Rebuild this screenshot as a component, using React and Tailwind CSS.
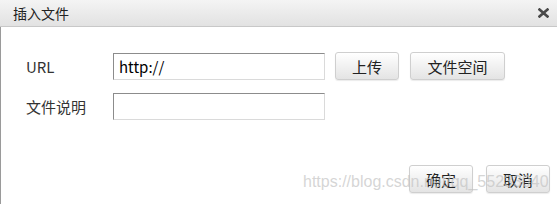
import React from "react";

const cjk = { fontFamily: '"Noto Sans CJK SC", "Noto Sans", sans-serif' };

function Btn({ children, w }) {
  return (
    <button
      className={`${w} h-[28px] rounded-[3px] border border-[#cfcfcf] bg-gradient-to-b from-[#ffffff] to-[#e4e4e4] text-[15px] text-[#222] leading-none flex items-center justify-center shadow-[0_1px_1px_rgba(0,0,0,0.08)]`}
      style={cjk}
    >
      {children}
    </button>
  );
}

export default function App() {
  return (
    <div className="relative w-[557px] h-[204px] overflow-hidden bg-white" style={cjk}>
      <div className="h-[27px] flex items-center justify-between pl-[13px] pr-[8px] bg-gradient-to-b from-[#f4f4f4] to-[#e2e2e2] border-b border-[#c8c8c8]">
        <span className="text-[14px] text-[#222] leading-none">插入文件</span>
        <svg width="11" height="10" viewBox="0 0 11 10">
          <path d="M1.5 1.5 L9.5 8.5 M9.5 1.5 L1.5 8.5" stroke="#4a4a4a" strokeWidth="2.6" strokeLinecap="square" />
        </svg>
      </div>
      <div className="flex flex-col h-[177px] border-l border-[#9a9a9a] pt-[25px]">
        <div className="flex items-center pl-[25px] h-[28px]">
          <span className="w-[87px] text-[15px] text-[#333] leading-none">URL</span>
          <div className="w-[212px] h-[27px] border-t border-l border-[#8c8c8c] border-r border-b border-r-[#dadada] border-b-[#dadada] flex items-center pl-[5px] text-[15px] text-black leading-none">
            http://
          </div>
          <div className="ml-[10px]">
            <Btn w="w-[64px]">上传</Btn>
          </div>
          <div className="ml-[11px]">
            <Btn w="w-[95px]">文件空间</Btn>
          </div>
        </div>
        <div className="flex items-center pl-[25px] mt-[13px] h-[27px]">
          <span className="w-[87px] text-[15px] text-[#333] leading-none">文件说明</span>
          <div className="w-[212px] h-[27px] border-t border-l border-[#8c8c8c] border-r border-b border-r-[#dadada] border-b-[#dadada]"></div>
        </div>
        <div className="flex justify-end gap-[13px] pr-[7px] mt-[45px]">
          <Btn w="w-[64px]">确定</Btn>
          <Btn w="w-[64px]">取消</Btn>
        </div>
      </div>
      <div
        className="absolute left-[303px] top-[174px] text-[16px] leading-none text-[rgba(195,195,195,0.7)] pointer-events-none whitespace-nowrap"
        style={{ fontFamily: '"Liberation Sans", Arial, sans-serif' }}
      >
        https://blog.csdn.net/qq_55233040
      </div>
    </div>
  );
}
